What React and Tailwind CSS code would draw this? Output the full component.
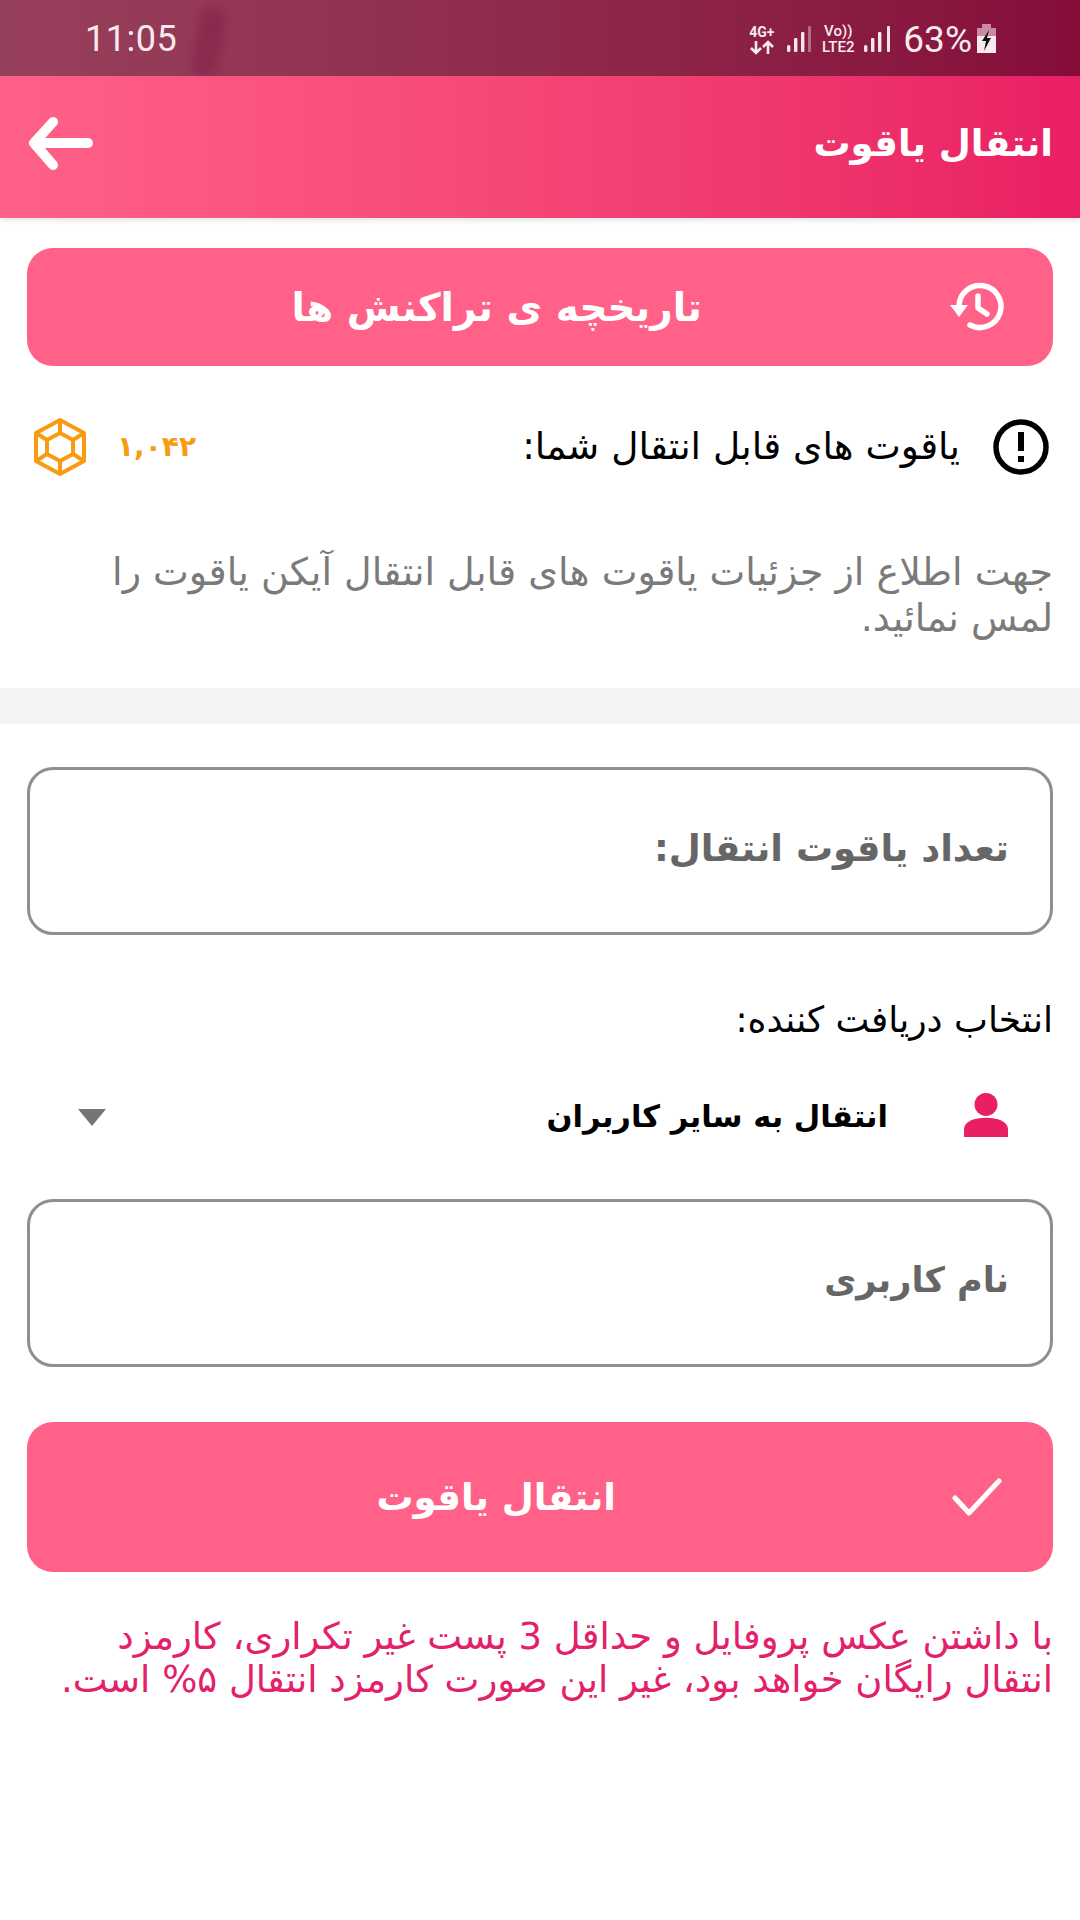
import React from "react";

const fa = { fontFamily: '"DejaVu Sans", "Noto Sans", sans-serif' };

function Signal({ dim, w }) {
  return (
    <svg width={w} height="28" viewBox={`0 0 ${w} 28`}>
      <rect x="0" y="20" width="3.4" height="7" rx="1.5" fill="#f5e6ec" />
      <rect x="7" y="13" width="3.4" height="14" rx="1" fill="#f5e6ec" />
      <rect x="14" y="7" width="3.4" height="20" rx="1" fill="#f5e6ec" />
      <rect x={w - 3} y="1" width="3" height="26" rx="1" fill="#f5e6ec" opacity={dim ? 0.4 : 1} />
    </svg>
  );
}

function StatusBar() {
  return (
    <div className="relative h-[76px] flex items-center justify-between bg-gradient-to-r from-[#97405c] via-[#8e2a4b] to-[#860c3a] pl-[85px] pr-[83px] text-[#f7e9ee] overflow-hidden" style={{ fontFamily: '"Roboto", sans-serif' }}>
      <div className="absolute left-[196px] top-[6px] w-[26px] h-[72px] rounded-full bg-[#8a2a4e] blur-[5px] rotate-[10deg]" />
      <span className="relative text-[36px] leading-none tracking-[0.5px] mt-[2px]">11:05</span>
      <div className="relative flex items-center mt-[2px]">
        <div className="w-[29px] flex flex-col items-center text-[14px] font-bold leading-[16px]">
          <span>4G+</span>
          <svg width="28" height="15" viewBox="0 0 28 15" fill="none" stroke="#f7e9ee" strokeWidth="2.6">
            <path d="M8 1 V13 M3 8 L8 13 L13 8" />
            <path d="M20 14 V2 M15 7 L20 2 L25 7" />
          </svg>
        </div>
        <div className="ml-[11px]"><Signal dim w={24} /></div>
        <div className="ml-[8px] w-[38px] flex flex-col items-center text-[15px] font-medium leading-[16px]">
          <span>Vo))</span>
          <span>LTE2</span>
        </div>
        <div className="ml-[7px]"><Signal w={26} /></div>
        <span className="ml-[13px] text-[37px] leading-none">63%</span>
        <svg className="ml-[4px]" width="21" height="30" viewBox="0 0 21 30">
          <rect x="6" y="0" width="9" height="4" fill="#c98aa3" />
          <rect x="1" y="4" width="19" height="10" fill="#c98aa3" />
          <rect x="1" y="12" width="19" height="17" fill="#f7e9ee" />
          <path d="M13 6 L6 17 H10 L8 27 L15 14 H11 Z" fill="#111" />
        </svg>
      </div>
    </div>
  );
}

function AppBar() {
  return (
    <div dir="rtl" className="h-[142px] flex items-center justify-between bg-gradient-to-l from-[#e91e63] to-[#ff6188] pr-[27px] pl-[28px] shadow-[0_2px_6px_rgba(0,0,0,0.12)]">
      <span className="text-[37px] font-bold text-white leading-none mb-[8px]" style={fa}>انتقال یاقوت</span>
      <svg className="mb-[6px]" width="66" height="56" viewBox="0 0 66 56" fill="none" stroke="white" strokeWidth="10" strokeLinecap="round" strokeLinejoin="round">
        <path d="M60 27H7" />
        <path d="M25 6 L6 27 L25 49" />
      </svg>
    </div>
  );
}

function Field({ placeholder, size }) {
  return (
    <div className="h-[168px] mx-[27px] rounded-[26px] border-[3px] border-[#8f8f8f] flex items-center pr-[41px]">
      <span className={`${size} font-bold text-[#666666] leading-none mb-[6px]`} style={fa}>{placeholder}</span>
    </div>
  );
}

export default function App() {
  return (
    <div className="w-[1080px] h-[1920px] bg-white overflow-hidden" style={fa}>
      <StatusBar />
      <AppBar />
      <div dir="rtl" className="pt-[30px]">
        <div className="h-[118px] mx-[27px] rounded-[26px] bg-[#ff6188] flex items-center pr-[49px]">
          <svg width="56" height="50" viewBox="0 0 56 50" fill="none" stroke="white" strokeWidth="5.5">
            <path d="M11 25 A21 21 0 1 1 22 43" strokeLinecap="round" />
            <path d="M2 23 H20 L11 35 Z" fill="white" stroke="none" />
            <path d="M30 14 V26 L39 32" strokeLinecap="round" strokeLinejoin="round" />
          </svg>
          <span className="mr-[246px] text-[39px] font-bold text-white leading-none" style={fa}>تاریخچه ی تراکنش ها</span>
        </div>

        <div className="mt-[47px] h-[68px] flex items-center justify-between pr-[31px] pl-[33px]">
          <div className="flex items-center">
            <svg width="56" height="56" viewBox="0 0 56 56" fill="none" stroke="black" strokeWidth="5.5">
              <circle cx="28" cy="28" r="25" />
              <path d="M28 13 V32" strokeWidth="6" />
              <path d="M28 37 V43" strokeWidth="6" />
            </svg>
            <span className="mr-[33px] text-[37.5px] text-black leading-none" style={fa}>یاقوت های قابل انتقال شما:</span>
          </div>
          <div className="flex items-center" dir="ltr">
            <svg width="54" height="58" viewBox="0 0 54 58" fill="none" stroke="#f99b11" strokeWidth="4" strokeLinejoin="round">
              <path d="M27 2 L51 15 V43 L27 56 L3 43 V15 Z" />
              <path d="M27 15 L40 22 V36 L27 43 L14 36 V22 Z" />
              <path d="M27 2 V15 M51 15 L40 22 M51 43 L40 36 M27 56 V43 M3 43 L14 36 M3 15 L14 22" />
            </svg>
            <span className="ml-[30px] text-[28px] font-bold text-[#f99b11] leading-none" style={fa}>۱,۰۴۲</span>
          </div>
        </div>

        <p className="mt-[68px] mr-[27px] ml-[100px] text-[38px] leading-[46px] text-[#7a7a7a]" style={fa}>
          جهت اطلاع از جزئیات یاقوت های قابل انتقال آیکن یاقوت را لمس نمائید.
        </p>

        <div className="mt-[47px] h-[36px] bg-[#f3f3f3]" />

        <div className="mt-[43px]">
          <Field placeholder="تعداد یاقوت انتقال:" size="text-[37px]" />
        </div>

        <div className="mt-[67px] mr-[27px] text-[36px] leading-[36px] text-black" style={fa}>انتخاب دریافت کننده:</div>

        <div className="mt-[43px] h-[72px] flex items-center justify-between pr-[72px] pl-[78px]">
          <div className="flex items-center">
            <svg className="mb-[4px]" width="44" height="46" viewBox="0 0 46 46" fill="#e91e63">
              <ellipse cx="23" cy="12" rx="12" ry="12" />
              <path d="M0 46 V38 C0 30 11 26 23 26 C35 26 46 30 46 38 V46 Z" />
            </svg>
            <span className="mr-[76px] text-[30.5px] font-bold text-black leading-none" style={fa}>انتقال به سایر کاربران</span>
          </div>
          <svg width="28" height="17" viewBox="0 0 28 17" fill="#757575"><path d="M0 0 H28 L14 17 Z" /></svg>
        </div>

        <div className="mt-[46px]">
          <Field placeholder="نام کاربری" size="text-[35px]" />
        </div>

        <div className="mt-[55px] h-[150px] mx-[27px] rounded-[26px] bg-[#ff6188] flex items-center pr-[51px]">
          <svg width="50" height="40" viewBox="0 0 50 40" fill="none" stroke="white" strokeWidth="5" strokeLinecap="round" strokeLinejoin="round">
            <path d="M3 21 L17 36 L47 4" />
          </svg>
          <span className="mr-[336px] text-[37px] font-bold text-white leading-none" style={fa}>انتقال یاقوت</span>
        </div>

        <p className="mt-[43px] mr-[27px] ml-[50px] text-[37px] leading-[43px] text-[#e3206a]" style={fa}>
          با داشتن عکس پروفایل و حداقل 3 پست غیر تکراری، کارمزد انتقال رایگان خواهد بود، غیر این صورت کارمزد انتقال ۵% است.
        </p>
      </div>
    </div>
  );
}
